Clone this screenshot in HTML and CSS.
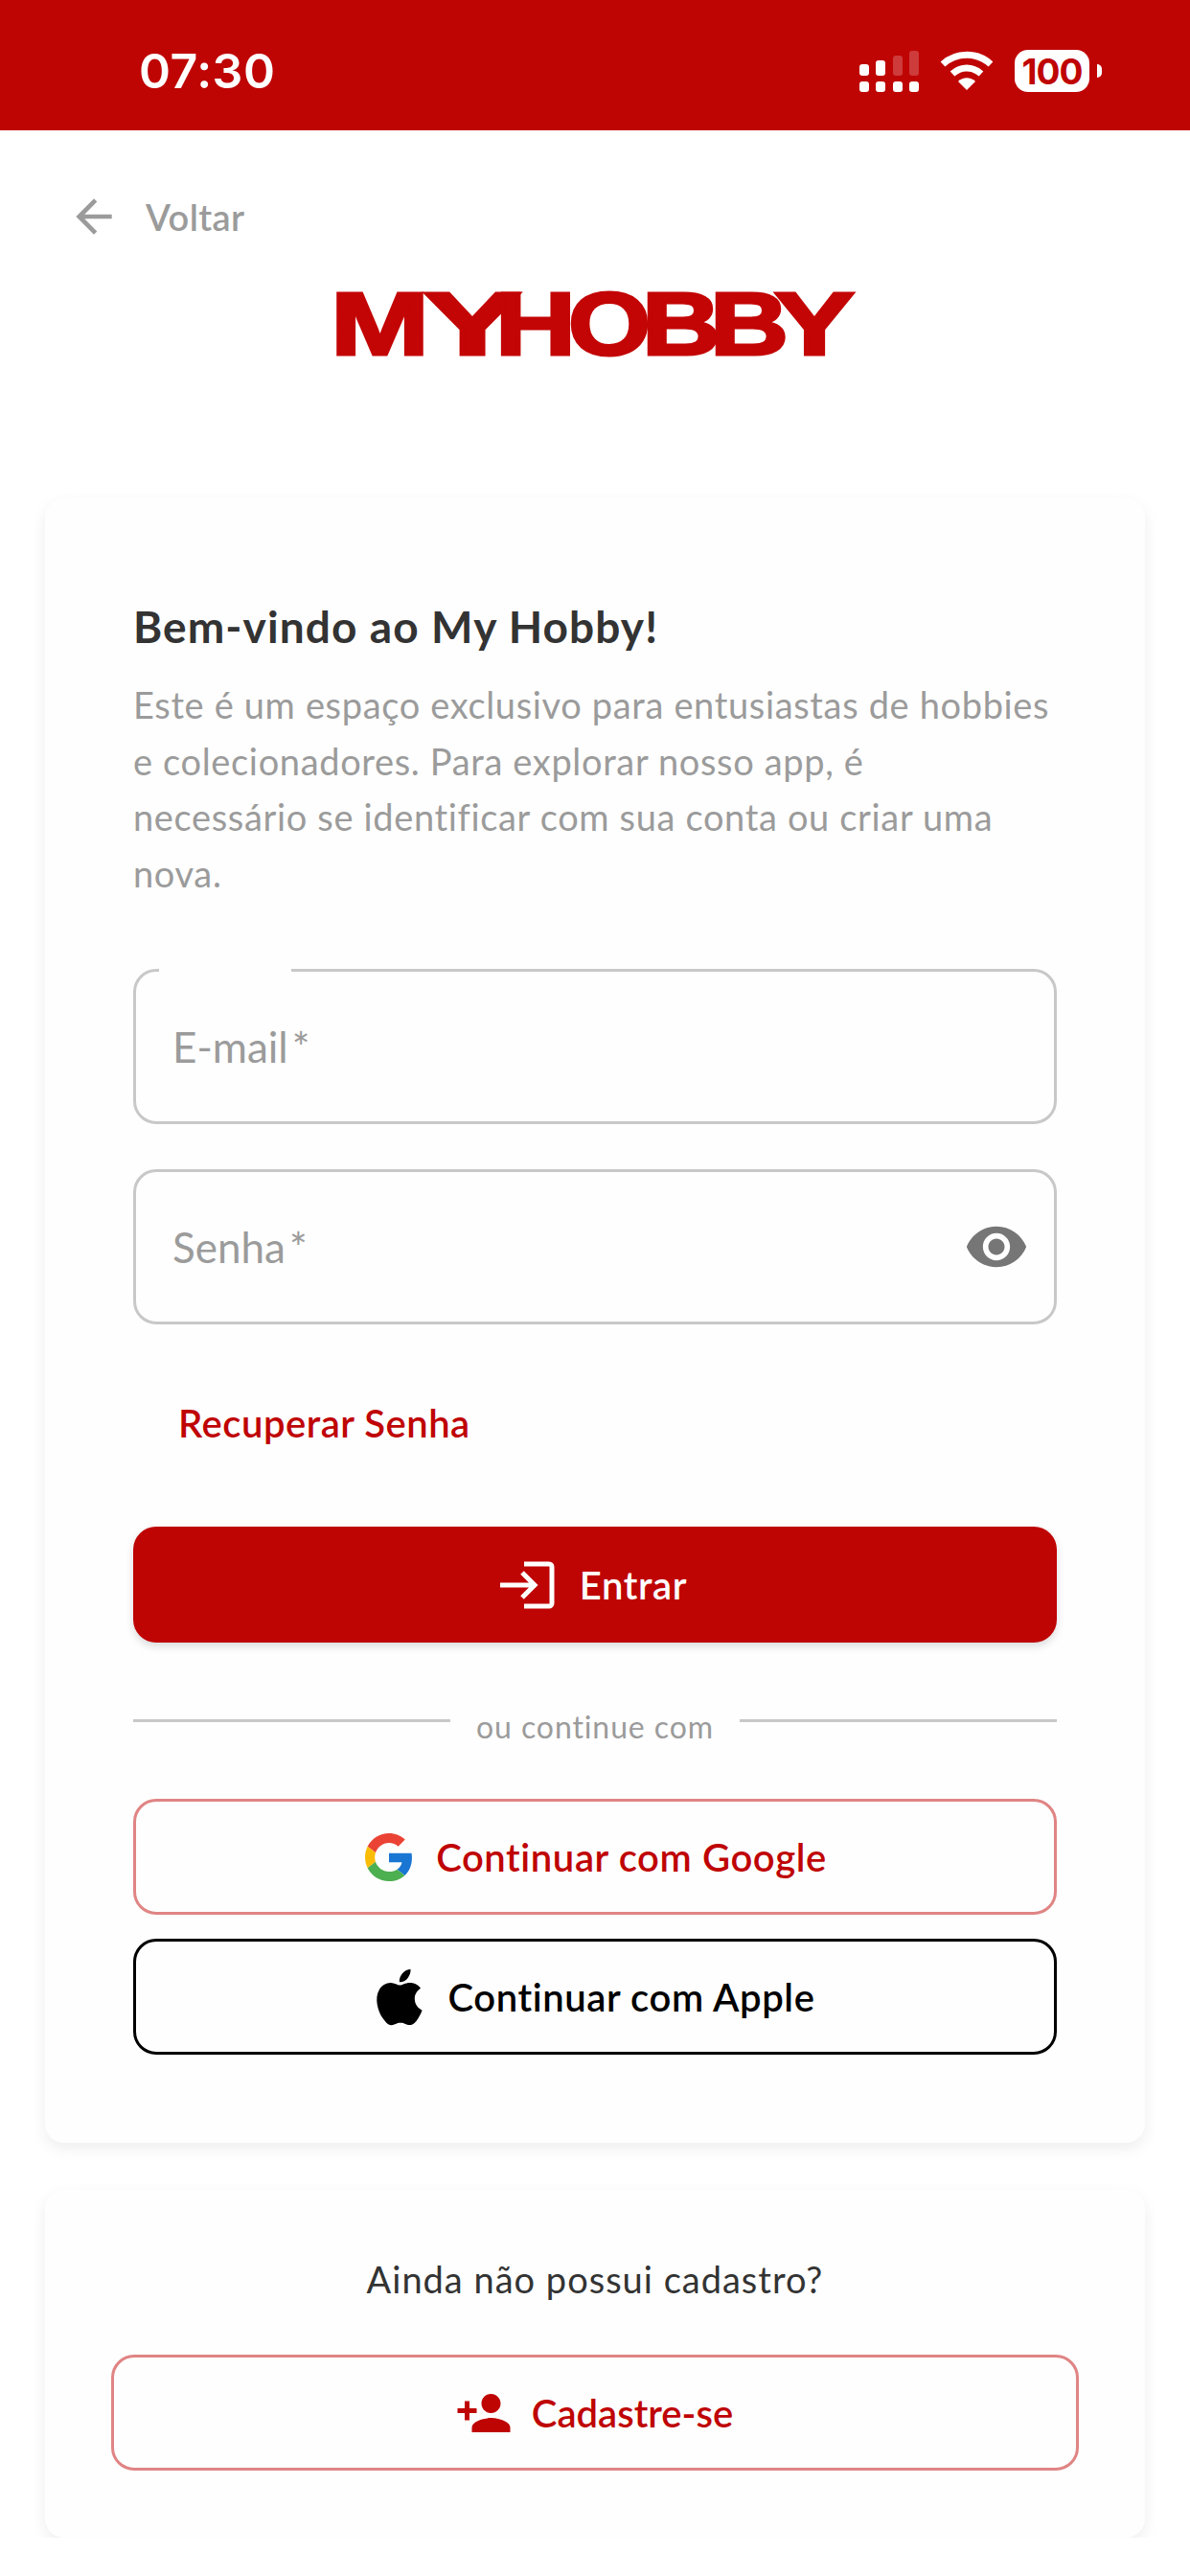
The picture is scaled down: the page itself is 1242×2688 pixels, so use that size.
FILE: index.html
```html
<!DOCTYPE html>
<html>
<head>
  <meta charset="UTF-8">
  <meta name="viewport" content="width=device-width, initial-scale=1.0">
  <title>My Hobby</title>
  <link rel="stylesheet" href="styles.css">
</head>
<body>
  <!-- Status bar -->
  <div class="status-bar">
    <span class="status-time">07:30</span>
    <div class="status-icons">
      <svg class="icon-signal" width="62" height="43" viewBox="0 0 62 43">
        <g fill="#fff">
          <rect x="0" y="14" width="10" height="12" rx="3"/>
          <rect x="17" y="10" width="10" height="16" rx="3"/>
          <rect x="0" y="32" width="10" height="11" rx="3"/>
          <rect x="17" y="32" width="10" height="11" rx="3"/>
          <rect x="35" y="32" width="10" height="11" rx="3"/>
          <rect x="52" y="32" width="10" height="11" rx="3"/>
        </g>
        <g fill="#fff" opacity="0.22">
          <rect x="35" y="5" width="10" height="21" rx="3"/>
          <rect x="52" y="0" width="10" height="26" rx="3"/>
        </g>
      </svg>
      <svg class="icon-wifi" width="56" height="42" viewBox="0 0 56 42">
        <path d="M3 14 C17 1 39 1 53 14" fill="none" stroke="#fff" stroke-width="7"/>
        <path d="M13 24 C22 16 34 16 43 24" fill="none" stroke="#fff" stroke-width="7"/>
        <path d="M19 32 C24 27 32 27 37 32 L28 41 Z" fill="#fff"/>
      </svg>
      <div class="battery">
        <span class="battery-level">100</span>
        <span class="battery-nub"></span>
      </div>
    </div>
  </div>

  <div class="back-link">
    <svg class="back-arrow" width="56" height="56" viewBox="0 0 24 24"><path d="M20 11H7.83l5.59-5.59L12 4l-8 8 8 8 1.41-1.41L7.83 13H20v-2z"/></svg>
    <span>Voltar</span>
  </div>

  <div class="logo">
    <svg width="542" height="73" viewBox="0 0 542 73">
      <text class="logo-text" y="69"><tspan x="-5" textLength="103" lengthAdjust="spacingAndGlyphs">M</tspan><tspan x="92" textLength="102" lengthAdjust="spacingAndGlyphs">Y</tspan><tspan x="167" textLength="84" lengthAdjust="spacingAndGlyphs">H</tspan><tspan x="243" textLength="86" lengthAdjust="spacingAndGlyphs">O</tspan><tspan x="320" textLength="82" lengthAdjust="spacingAndGlyphs">B</tspan><tspan x="391" textLength="82" lengthAdjust="spacingAndGlyphs">B</tspan><tspan x="458" textLength="84" lengthAdjust="spacingAndGlyphs">Y</tspan></text>
    </svg>
  </div>

  <div class="card card-login">
    <h1 class="welcome-title">Bem-vindo ao My Hobby!</h1>
    <p class="welcome-text">Este é um espaço exclusivo para entusiastas de hobbies<br>e colecionadores. Para explorar nosso app, é<br>necessário se identificar com sua conta ou criar uma<br>nova.</p>

    <div class="field field-email">
      <span class="field-label">E-mail<span class="field-star">*</span></span>
    </div>
    <div class="field field-password">
      <span class="field-label">Senha<span class="field-star">*</span></span>
      <svg class="eye-icon" width="68" height="68" viewBox="0 0 24 24"><path d="M12 4.5C7 4.5 2.73 7.61 1 12c1.73 4.39 6 7.5 11 7.5s9.27-3.11 11-7.5c-1.73-4.39-6-7.5-11-7.5zM12 17c-2.76 0-5-2.24-5-5s2.24-5 5-5 5 2.24 5 5-2.24 5-5 5zm0-8c-1.66 0-3 1.34-3 3s1.34 3 3 3 3-1.34 3-3-1.34-3-3-3z"/></svg>
    </div>

    <div class="recover-link">Recuperar Senha</div>

    <button class="btn btn-primary">
      <svg width="58" height="50" viewBox="0 0 58 50" fill="none" stroke="#fff" stroke-width="5">
        <path d="M26 3h26a3 3 0 0 1 3 3v38a3 3 0 0 1-3 3H26"/>
        <path d="M1 25h36M24 12l13 13-13 13"/>
      </svg>
      <span>Entrar</span>
    </button>

    <div class="divider">
      <span class="divider-line"></span>
      <span class="divider-text">ou continue com</span>
      <span class="divider-line"></span>
    </div>

    <button class="btn btn-outline btn-google">
      <svg width="50" height="50" viewBox="0 0 48 48">
        <path fill="#EA4335" d="M24 9.5c3.54 0 6.71 1.22 9.21 3.6l6.85-6.85C35.9 2.38 30.47 0 24 0 14.62 0 6.51 5.38 2.56 13.22l7.98 6.19C12.43 13.72 17.74 9.5 24 9.5z"/>
        <path fill="#1976D2" d="M46.98 24.55c0-1.57-.15-3.09-.38-4.55H24v9.02h12.94c-.58 2.96-2.26 5.48-4.78 7.18l7.73 6c4.51-4.18 7.09-10.36 7.09-17.65z"/>
        <path fill="#FBBC05" d="M10.53 28.59c-.48-1.45-.76-2.99-.76-4.59s.27-3.14.76-4.59l-7.98-6.19C.92 16.46 0 20.12 0 24c0 3.88.92 7.54 2.56 10.78l7.97-6.19z"/>
        <path fill="#4CAF50" d="M24 48c6.48 0 11.93-2.13 15.89-5.81l-7.73-6c-2.15 1.45-4.92 2.3-8.16 2.3-6.26 0-11.57-4.22-13.47-9.91l-7.98 6.19C6.51 42.62 14.62 48 24 48z"/>
      </svg>
      <span>Continuar com Google</span>
    </button>

    <button class="btn btn-apple">
      <svg width="70" height="70" viewBox="0 0 24 24"><path d="M18.71 19.5c-.83 1.24-1.71 2.45-3.05 2.47-1.34.03-1.77-.79-3.29-.79-1.53 0-2 .77-3.27.82-1.31.05-2.3-1.32-3.14-2.53C4.25 17 2.94 12.45 4.7 9.39c.87-1.52 2.43-2.48 4.12-2.51 1.28-.02 2.5.87 3.29.87.78 0 2.26-1.07 3.81-.91.65.03 2.47.26 3.64 1.98-.09.06-2.17 1.28-2.15 3.81.03 3.02 2.65 4.03 2.68 4.04-.03.07-.42 1.44-1.38 2.83M13 3.5c.73-.83 1.94-1.46 2.94-1.5.13 1.17-.34 2.35-1.04 3.19-.69.85-1.83 1.51-2.95 1.42-.15-1.15.41-2.35 1.05-3.11z"/></svg>
      <span>Continuar com Apple</span>
    </button>
  </div>

  <div class="card card-signup">
    <p class="signup-text">Ainda não possui cadastro?</p>
    <button class="btn btn-outline btn-signup">
      <svg width="60" height="60" viewBox="0 0 24 24"><path d="M15 12c2.21 0 4-1.79 4-4s-1.79-4-4-4-4 1.79-4 4 1.79 4 4 4zm-9-2V7H4v3H1v2h3v3h2v-3h3v-2H6zm9 4c-2.67 0-8 1.34-8 4v2h16v-2c0-2.66-5.33-4-8-4z"/></svg>
      <span>Cadastre-se</span>
    </button>
  </div>
</body>
</html>
```

FILE: styles.css
```css
/* Page */
body {
  margin: 0;
  background: #fff;
  font-family: Lato, "Open Sans", sans-serif;
  color: #333;
}

/* Status bar */
.status-bar {
  height: 136px;
  background: #bf0404;
  display: flex;
  align-items: center;
  justify-content: space-between;
  padding: 12px 105px 0 145px;
  box-sizing: border-box;
  color: #fff;
}
.status-time {
  font-family: Inter, sans-serif;
  font-size: 50px;
  font-weight: 600;
  letter-spacing: 0.5px;
}
.status-icons {
  display: flex;
  align-items: center;
  gap: 22px;
}
.battery {
  position: relative;
  width: 78px;
  height: 44px;
  background: #fff;
  border-radius: 14px;
  display: flex;
  align-items: center;
  justify-content: center;
}
.battery-level {
  font-family: Inter, sans-serif;
  font-size: 37px;
  font-weight: 700;
  color: #bf0404;
  letter-spacing: -1px;
}
.battery-nub {
  position: absolute;
  right: -13px;
  top: 15px;
  width: 5px;
  height: 14px;
  background: #fff;
  border-radius: 0 6px 6px 0;
}

/* Back link and logo */
.back-link {
  display: flex;
  align-items: center;
  gap: 26px;
  height: 48px;
  margin-top: 66px;
  padding-left: 70px;
  font-size: 38px;
  font-weight: 600;
  letter-spacing: 0.4px;
  color: #9b9b9b;
}
.back-arrow {
  fill: #9b9b9b;
}
.logo {
  display: flex;
  justify-content: center;
  margin-top: 51px;
  height: 73px;
}
.logo svg {
  overflow: visible;
}
.logo-text {
  font-family: "Liberation Sans", sans-serif;
  font-weight: 700;
  font-size: 92px;
  fill: #c30505;
  stroke: #c30505;
  stroke-width: 3px;
}

/* Cards */
.card {
  width: 1148px;
  margin-left: 47px;
  box-sizing: border-box;
  background: #fefefe;
  border-radius: 20px;
  box-shadow: 0 6px 16px rgba(0, 0, 0, 0.07);
}
.card-login {
  margin-top: 146px;
  padding: 105px 92px 92px;
}
.card-signup {
  margin-top: 49px;
  padding: 68px 69px 70px;
}

.welcome-title {
  margin: 0;
  font-size: 46px;
  line-height: 58px;
  font-weight: 700;
  letter-spacing: 1.1px;
  color: #333;
}
.welcome-text {
  margin: 23px 0 0;
  font-size: 38px;
  line-height: 58.5px;
  letter-spacing: 0.65px;
  color: #9b9b9b;
  white-space: nowrap;
}

/* Fields */
.field {
  position: relative;
  display: flex;
  align-items: center;
  justify-content: space-between;
  height: 162px;
  padding: 0 26px 0 38px;
  box-sizing: border-box;
  border: 3px solid #c8c8c8;
  border-radius: 24px;
}
.field-email {
  margin-top: 71px;
}
.field-email::before {
  content: "";
  position: absolute;
  top: -3px;
  left: 24px;
  width: 138px;
  height: 3px;
  background: #fefefe;
}
.field-password {
  margin-top: 47px;
}
.field-label {
  font-size: 44px;
  color: #9b9b9b;
}
.field-star {
  margin-left: 4px;
}
.eye-icon {
  fill: #767676;
}

.recover-link {
  margin-top: 78px;
  padding-left: 47px;
  font-size: 40px;
  line-height: 50px;
  font-weight: 600;
  letter-spacing: 0.5px;
  color: #bf0404;
}

/* Buttons */
.btn {
  display: flex;
  align-items: center;
  justify-content: center;
  gap: 24px;
  width: 100%;
  height: 121px;
  box-sizing: border-box;
  border-radius: 24px;
  font-family: inherit;
  font-size: 40px;
  font-weight: 600;
  letter-spacing: 0.6px;
  cursor: pointer;
}
.btn-primary {
  margin-top: 83px;
  gap: 26px;
  padding-right: 10px;
  background: #bf0404;
  color: #fff;
  border: none;
  box-shadow: 0 4px 8px rgba(0, 0, 0, 0.14);
}
.btn-outline {
  background: #fefefe;
  color: #bf0404;
  border: 3px solid #e08484;
}
.btn-signup {
  gap: 20px;
  padding-right: 8px;
  letter-spacing: 0;
}
.btn-signup svg {
  fill: #bf0404;
}
.btn-google {
  margin-top: 53px;
  padding-right: 4px;
}
.btn-apple {
  margin-top: 25px;
  gap: 16px;
  padding-right: 16px;
  background: #fefefe;
  color: #000;
  border: 3px solid #000;
}

/* Divider */
.divider {
  display: flex;
  align-items: flex-start;
  justify-content: space-between;
  height: 44px;
  margin-top: 66px;
}
.divider-line {
  width: 331px;
  height: 3px;
  margin-top: 14px;
  background: #c8c8c8;
}
.divider-text {
  font-size: 32px;
  line-height: 44px;
  letter-spacing: 0.9px;
  color: #9b9b9b;
}

.signup-text {
  margin: 0 0 54px;
  font-size: 38px;
  line-height: 50px;
  letter-spacing: 1px;
  text-align: center;
  color: #333;
}
```
